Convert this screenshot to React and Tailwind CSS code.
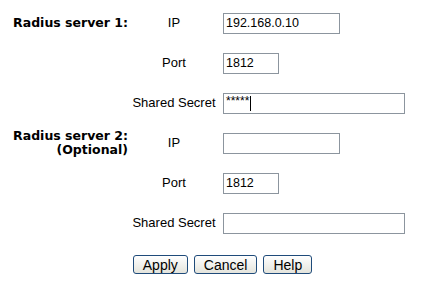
export default function App() {
  const rows = [
    { group: 'Radius server 1:', label: 'IP', value: '192.168.0.10', width: 'w-[117px]' },
    { label: 'Port', value: '1812', width: 'w-[56px]' },
    { label: 'Shared Secret', secret: true, width: 'w-[182px]' },
    { group: 'Radius server 2:', sub: '(Optional)', label: 'IP', value: '', width: 'w-[117px]' },
    { label: 'Port', value: '1812', width: 'w-[56px]' },
    { label: 'Shared Secret', value: '', width: 'w-[182px]' },
  ];

  return (
    <div className="w-[444px] h-[297px] bg-white pt-[3px] text-black font-['Liberation_Sans',Arial,sans-serif]">
      {rows.map((r, i) => (
        <div key={i} className="flex items-center h-10">
          <div className="w-[128px] text-right font-['DejaVu_Sans',Verdana,sans-serif] font-bold text-[12.5px] leading-[14px]">
            {r.group && <div>{r.group}</div>}
            {r.sub && <div>{r.sub}</div>}
          </div>
          <div className="w-[92px] text-center text-[13px]">{r.label}</div>
          <div
            className={`ml-[3px] h-[21px] border border-[#8c959e] bg-white flex items-center px-[2px] text-[12.5px] ${r.width}`}
          >
            {r.secret ? (
              <span className="flex items-center">
                <span className="text-[12px] leading-none -mt-[4px]">*****</span>
                <span className="ml-px w-px h-[15px] bg-black" />
              </span>
            ) : (
              r.value
            )}
          </div>
        </div>
      ))}
      <div className="flex justify-center gap-[6px] mt-3 ml-[1px]">
        {['Apply', 'Cancel', 'Help'].map((b) => (
          <button
            key={b}
            className="h-[19px] px-[9px] rounded-[3px] border border-[#1f4b7a] bg-gradient-to-b from-white to-[#e4e4dc] text-[14px] leading-none"
          >
            {b}
          </button>
        ))}
      </div>
    </div>
  );
}
